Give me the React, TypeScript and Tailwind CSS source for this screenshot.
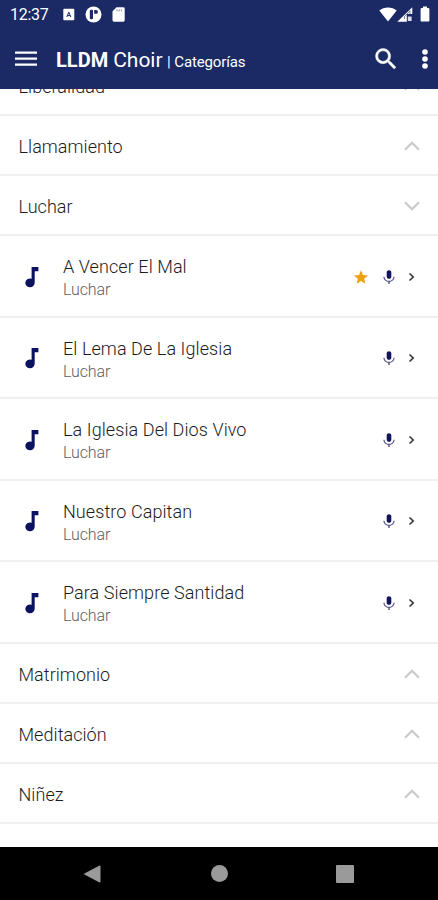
interface Song {
  title: string;
  favorite?: boolean;
}

interface Category {
  name: string;
  songs?: Song[];
}

const CATEGORIES: Category[] = [
  { name: 'Liberalidad' },
  { name: 'Llamamiento' },
  {
    name: 'Luchar',
    songs: [
      { title: 'A Vencer El Mal', favorite: true },
      { title: 'El Lema De La Iglesia' },
      { title: 'La Iglesia Del Dios Vivo' },
      { title: 'Nuestro Capitan' },
      { title: 'Para Siempre Santidad' },
    ],
  },
  { name: 'Matrimonio' },
  { name: 'Meditación' },
  { name: 'Niñez' },
];

function StatusBar() {
  return (
    <div className="flex h-7 items-center pl-[10px] pr-2 text-white">
      <span className="w-[53px] pt-[2px] text-[16px] leading-7 tracking-[-0.3px]">12:37</span>
      <svg className="h-[13px] w-[12px]" viewBox="0 0 12 13">
        <rect x="0.3" y="0.8" width="11" height="11.4" rx="1" fill="white" />
        <path d="M3.8 9 5.8 4.2 7.8 9M4.5 7.6h2.6" fill="none" stroke="#1b2965" strokeWidth="1" />
      </svg>
      <svg className="ml-[10px] h-[17px] w-[17px]" viewBox="0 0 17 17">
        <circle cx="8.5" cy="8.5" r="8" fill="white" />
        <rect x="4.8" y="3.8" width="3.2" height="9.4" rx="1.3" fill="#1b2965" />
        <path d="M9.2 4h1.8a1.9 1.9 0 0 1 0 3.8H9.2z" fill="#1b2965" />
      </svg>
      <svg className="ml-[10px] h-[15px] w-[13px]" viewBox="0 0 13 15">
        <path d="M4.5 0.3h6.8a1.4 1.4 0 0 1 1.4 1.4v11.6a1.4 1.4 0 0 1-1.4 1.4H1.9a1.4 1.4 0 0 1-1.4-1.4V4.3z" fill="white" />
        <path d="M5 2.4v2M7.2 2.4v2M9.4 2.4v2" stroke="#1b2965" strokeWidth="0.9" opacity="0.6" />
      </svg>
      <div className="flex-1" />
      <svg className="h-[15px] w-[18px]" viewBox="0 0 18 15">
        <path d="M0.3 3.6C5 -0.6 13 -0.6 17.7 3.6L9 14.6z" fill="white" />
      </svg>
      <svg className="h-[15px] w-[16px]" viewBox="0 0 16 15">
        <path d="M0.3 14.7 15.3 0.3V7H9.8v7.7z" fill="white" />
        <path d="M7.5 12V9.5L13 3.8V7" fill="none" stroke="#1b2965" strokeWidth="1" opacity="0.6" />
        <path d="M10.8 9.5h3.8v4.5h-3.8z" fill="white" opacity="0.85" />
      </svg>
      <svg className="ml-[7px] h-[16px] w-[10px]" viewBox="0 0 10 16">
        <path d="M3 0.5h4v1.5h1.2a1.2 1.2 0 0 1 1.2 1.2v11.2a1.2 1.2 0 0 1-1.2 1.2H1.8a1.2 1.2 0 0 1-1.2-1.2V3.2A1.2 1.2 0 0 1 1.8 2H3z" fill="white" />
      </svg>
    </div>
  );
}

function Toolbar() {
  return (
    <div className="flex h-[61px] items-center pl-[14px] pr-[9px] text-white">
      <svg className="h-[18px] w-[24px]" viewBox="0 0 24 18">
        <path d="M1 2.6h22M1 8.6h22M1 14.6h22" stroke="white" strokeWidth="2.4" />
      </svg>
      <h1 className="ml-[18px] flex items-baseline whitespace-nowrap pt-[4px]">
        <span className="text-[20px] font-bold">LLDM</span>
        <span className="ml-[5px] text-[21px]">Choir</span>
        <span className="ml-[4.5px] text-[15px] tracking-[-0.12px]">| Categorías</span>
      </h1>
      <div className="flex-1" />
      <svg className="h-[28px] w-[28px]" viewBox="0 0 24 24" fill="white" stroke="white" strokeWidth="0.4">
        <path d="M15.5 14h-.79l-.28-.27A6.471 6.471 0 0 0 16 9.5 6.5 6.5 0 1 0 9.5 16c1.61 0 3.09-.59 4.23-1.57l.27.28v.79l5 4.99L20.49 19l-4.99-5zm-6 0C7.01 14 5 11.99 5 9.5S7.01 5 9.5 5 14 7.01 14 9.5 11.99 14 9.5 14z" />
      </svg>
      <svg className="ml-[21px] h-[22px] w-[8px]" viewBox="0 0 8 22" fill="white">
        <circle cx="4" cy="4" r="2.8" />
        <circle cx="4" cy="11" r="2.8" />
        <circle cx="4" cy="18" r="2.8" />
      </svg>
    </div>
  );
}

function CategoryRow({ name, open }: { name: string; open: boolean }) {
  return (
    <div className="flex h-[60px] shrink-0 items-center justify-between border-b-2 border-[#f0f0f0] pr-[18px] pl-[18.5px]">
      <span className="pt-[3px] text-[18px] font-light tracking-[0.05px] text-[#1c1c1c]">{name}</span>
      <svg className="mt-[2px] h-[10px] w-[16px]" viewBox="0 0 16 10">
        <path d={open ? 'M1 1.2 8 8.2 15 1.2' : 'M1 8.8 8 1.8 15 8.8'} fill="none" stroke="#cacaca" strokeWidth="2.2" />
      </svg>
    </div>
  );
}

function SongRow({ song, category }: { song: Song; category: string }) {
  return (
    <div className="flex h-[81.5px] shrink-0 items-center border-b-2 border-[#f0f0f0] pr-[23px] pl-[24px]">
      <svg className="mt-[2px] h-[22px] w-[15px]" viewBox="0 0 15 22" fill="#0c1260">
        <path d="M7.6 1h6.8v4.2h-3.7v11.4a4.7 4.4 0 1 1-3.1-3.9z" />
      </svg>
      <div className="ml-[24px] flex-1 pt-[5px]">
        <div className="mb-px text-[18px] leading-[23px] font-light tracking-[0.08px] text-[#1c1c1c]">{song.title}</div>
        <div className="text-[16px] leading-[22px] font-light tracking-[-0.1px] text-[#606060]">{category}</div>
      </div>
      {song.favorite && (
        <svg className="mt-[2px] mr-[14px] h-[14px] w-[14px]" viewBox="2 2 20 19" fill="#f0a010">
          <path d="M12 17.27 18.18 21l-1.64-7.03L22 9.24l-7.19-.61L12 2 9.19 8.63 2 9.24l5.46 4.73L5.82 21z" />
        </svg>
      )}
      <svg className="mt-[2px] h-[14px] w-[14px]" viewBox="4 1.5 16 20" fill="#14145c">
        <path d="M12 14c1.9 0 3.3-1.34 3.3-3V5c0-1.66-1.4-3-3.3-3S8.7 3.34 8.7 5v6c0 1.66 1.4 3 3.3 3z" />
        <path d="M18.4 11c0 3.6-3 6-6.4 6s-6.4-2.4-6.4-6H4c0 3.7 3.1 6.8 7 7.3V21.5h2v-3.2c3.9-.5 7-3.6 7-7.3z" opacity="0.75" />
      </svg>
      <svg className="mt-[2px] ml-[12px] h-[10px] w-[7px]" viewBox="0 0 7 10">
        <path d="M1.5 1.5 5.2 5 1.5 8.5" fill="none" stroke="#333" strokeWidth="1.6" />
      </svg>
    </div>
  );
}

function NavBar() {
  return (
    <div className="flex h-[53px] shrink-0 items-center bg-black pr-[84px] pl-[83px]">
      <svg className="h-[18px] w-[18px]" viewBox="0 0 18 18">
        <path d="M0.5 9 16.5 0.5q1 0 1 1v15q0 1-1 1z" fill="#9a9a9a" />
      </svg>
      <div className="flex flex-1 justify-center pl-px">
        <div className="h-[17px] w-[17px] rounded-full bg-[#9a9a9a]" />
      </div>
      <div className="h-[18px] w-[18px] rounded-[1px] bg-[#9a9a9a]" />
    </div>
  );
}

export default function App() {
  return (
    <div className="flex h-[900px] w-[438px] flex-col overflow-hidden bg-white font-['Roboto','Liberation_Sans',sans-serif]">
      <header className="h-[89px] shrink-0 bg-[#1b2965]">
        <StatusBar />
        <Toolbar />
      </header>
      <main className="flex-1 overflow-hidden">
        {/* list is scrolled part of the way through the first row */}
        <div className="-mt-[33px] flex flex-col">
          {CATEGORIES.map(c => (
            <div key={c.name}>
              <CategoryRow name={c.name} open={!!c.songs} />
              {c.songs?.map(s => <SongRow key={s.title} song={s} category={c.name} />)}
            </div>
          ))}
        </div>
      </main>
      <NavBar />
    </div>
  );
}
